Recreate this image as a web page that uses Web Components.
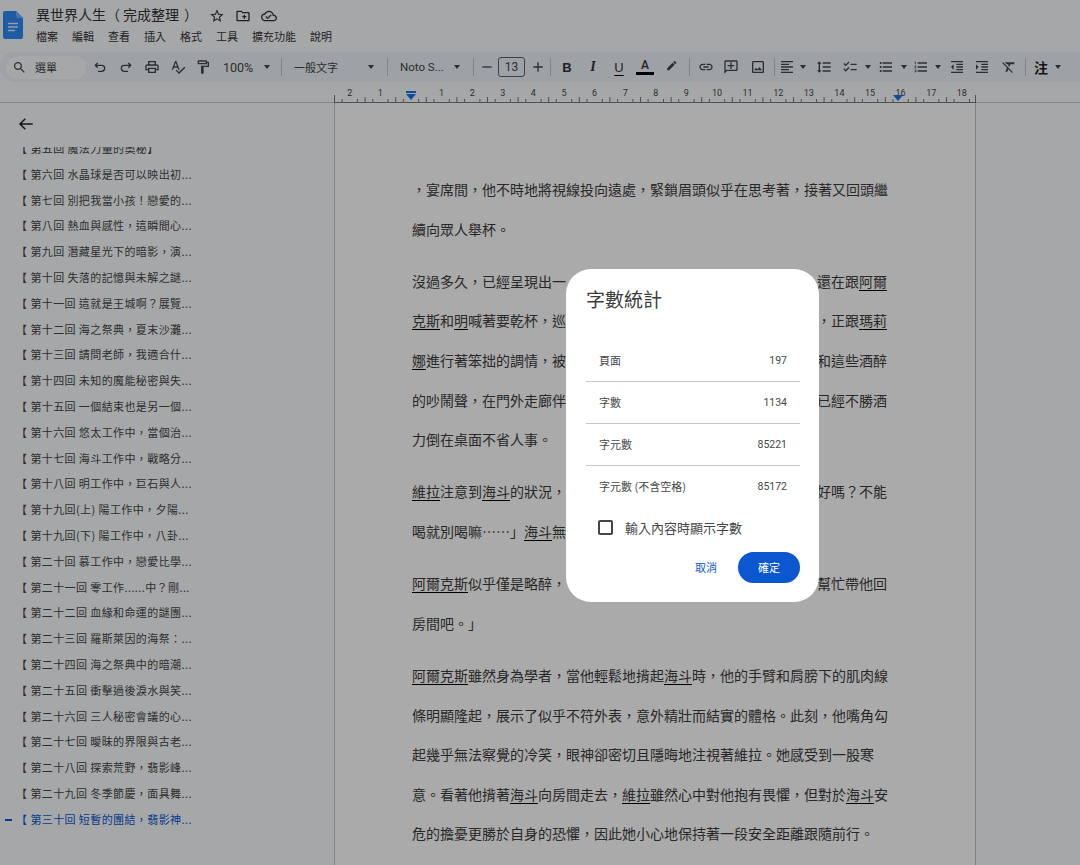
<!DOCTYPE html>
<html lang="zh-Hant">
<head>
<meta charset="utf-8">
<title>異世界人生（完成整理）</title>
<style>
  html, body { margin: 0; height: 100%; overflow: hidden; background: #f9fbfd; }
  body { font-family: "Noto Sans CJK TC", "Noto Sans", sans-serif; color: #444746; }
  u { text-underline-offset: 3px; text-decoration-thickness: 1px; text-decoration-color: #000; }
</style>
</head>
<body>
<docs-app>
  <docs-header slot="header"></docs-header>
  <docs-toolbar slot="toolbar">
    <tb-search></tb-search>
    <tb-space w="1"></tb-space>
    <tb-btn icon="undo" w="26"></tb-btn>
    <tb-btn icon="redo" w="26"></tb-btn>
    <tb-btn icon="print" w="26"></tb-btn>
    <tb-btn icon="spell" w="25"></tb-btn>
    <tb-btn icon="paint" w="26"></tb-btn>
    <tb-text w="43" pad="7" size="12.5">100%</tb-text>
    <tb-caret w="16"></tb-caret>
    <tb-sep w="12"></tb-sep>
    <tb-text w="76" pad="7" size="11">一般文字</tb-text>
    <tb-caret w="16"></tb-caret>
    <tb-sep w="16"></tb-sep>
    <tb-text w="54" pad="5" size="11.5">Noto S...</tb-text>
    <tb-caret w="16"></tb-caret>
    <tb-sep w="16"></tb-sep>
    <tb-btn icon="minus" w="12"></tb-btn>
    <tb-size w="37">13</tb-size>
    <tb-btn icon="plus" w="16"></tb-btn>
    <tb-sep w="8"></tb-sep>
    <tb-glyph w="26" style="font-weight:700">B</tb-glyph>
    <tb-glyph w="26" style="font-family:'Liberation Serif',serif;font-style:italic;font-weight:700;font-size:14px">I</tb-glyph>
    <tb-glyph w="26"><u>U</u></tb-glyph>
    <tb-color w="26">A</tb-color>
    <tb-btn icon="pen" w="27" size="13"></tb-btn>
    <tb-sep w="8"></tb-sep>
    <tb-btn icon="link" w="25"></tb-btn>
    <tb-btn icon="comment" w="26"></tb-btn>
    <tb-btn icon="image" w="27"></tb-btn>
    <tb-sep w="7"></tb-sep>
    <tb-btn icon="align" w="18"></tb-btn>
    <tb-caret w="14"></tb-caret>
    <tb-btn icon="spacing" w="28"></tb-btn>
    <tb-btn icon="check" w="24"></tb-btn>
    <tb-caret w="12"></tb-caret>
    <tb-btn icon="bullets" w="24"></tb-btn>
    <tb-caret w="12"></tb-caret>
    <tb-btn icon="numbers" w="22"></tb-btn>
    <tb-caret w="12"></tb-caret>
    <tb-btn icon="outdent" w="26"></tb-btn>
    <tb-btn icon="indent" w="24"></tb-btn>
    <tb-btn icon="clear" w="30"></tb-btn>
    <tb-sep w="2"></tb-sep>
    <tb-glyph w="30" style="font-weight:700;font-size:14px;color:#222;font-family:'Noto Sans CJK TC',sans-serif">注</tb-glyph>
    <tb-caret w="4"></tb-caret>
  </docs-toolbar>
  <docs-ruler slot="ruler"></docs-ruler>
  <docs-outline slot="outline" active="【第三十回 短暫的團結，翡影神..."></docs-outline>
  <docs-page slot="page">
    <doc-para>
      <doc-line>，宴席間，他不時地將視線投向遠處，緊鎖眉頭似乎在思考著，接著又回頭繼</doc-line>
      <doc-line>續向眾人舉杯。</doc-line>
    </doc-para>
    <doc-para>
      <doc-line>沒過多久，已經呈現出一<span slot="end">還在跟<u>阿爾</u></span></doc-line>
      <doc-line><u>克斯</u>和<u>明</u>喊著要乾杯，巡<span slot="end">，正跟<u>瑪莉</u></span></doc-line>
      <doc-line><u>娜</u>進行著笨拙的調情，被<span slot="end">和這些酒醉</span></doc-line>
      <doc-line>的吵鬧聲，在門外走廊伴<span slot="end">已經不勝酒</span></doc-line>
      <doc-line>力倒在桌面不省人事。</doc-line>
    </doc-para>
    <doc-para>
      <doc-line><u>維拉</u>注意到<u>海斗</u>的狀況，<span slot="end">好嗎？不能</span></doc-line>
      <doc-line>喝就別喝嘛……」<u>海斗</u>無</doc-line>
    </doc-para>
    <doc-para>
      <doc-line><u>阿爾克斯</u>似乎僅是略醉，<span slot="end">幫忙帶他回</span></doc-line>
      <doc-line>房間吧。」</doc-line>
    </doc-para>
    <doc-para>
      <doc-line><u>阿爾克斯</u>雖然身為學者，當他輕鬆地揹起<u>海斗</u>時，他的手臂和肩膀下的肌肉線</doc-line>
      <doc-line>條明顯隆起，展示了似乎不符外表，意外精壯而結實的體格。此刻，他嘴角勾</doc-line>
      <doc-line>起幾乎無法察覺的冷笑，眼神卻密切且隱晦地注視著維拉。她感受到一股寒</doc-line>
      <doc-line>意。看著他揹著<u>海斗</u>向房間走去，<u>維拉</u>雖然心中對他抱有畏懼，但對於<u>海斗</u>安</doc-line>
      <doc-line>危的擔憂更勝於自身的恐懼，因此她小心地保持著一段安全距離跟隨前行。</doc-line>
    </doc-para>
  </docs-page>
  <word-count-dialog slot="dialog">
    <wc-row label="頁面" value="197"></wc-row>
    <wc-row label="字數" value="1134"></wc-row>
    <wc-row label="字元數" value="85221"></wc-row>
    <wc-row label="字元數 (不含空格)" value="85172"></wc-row>
  </word-count-dialog>
</docs-app>

<script>
const ICONS = {
  print: 'M19 8h-1V3H6v5H5c-1.66 0-3 1.34-3 3v6h4v4h12v-4h4v-6c0-1.66-1.34-3-3-3zM8 5h8v3H8V5zm8 12v2H8v-4h8v2zm2-2v-2H6v2H4v-4c0-.55.45-1 1-1h14c.55 0 1 .45 1 1v4h-2z',
  spell: 'M12.45 16h2.09L9.43 3H7.57L2.46 16h2.09l1.12-3h5.64l1.14 3zm-6.02-5L8.5 5.48 10.57 11H6.43zm15.16.59l-8.09 8.09L9.83 16l-1.41 1.41 5.09 5.09L23 13l-1.41-1.41z',
  paint: 'M18 4V3c0-.55-.45-1-1-1H5c-.55 0-1 .45-1 1v4c0 .55.45 1 1 1h12c.55 0 1-.45 1-1V6h1v4H9v11c0 .55.45 1 1 1h2c.55 0 1-.45 1-1v-9h8V4h-3zm-2 2H6V4h10v2zm-5 8v6h0v-6z',
  pen: 'M17.75 7L14 3.25l-10 10V17h3.75l10-10zm2.96-2.96c.39-.39.39-1.02 0-1.41L18.37.29c-.39-.39-1.02-.39-1.41 0L15 2.25 18.75 6l1.96-1.96z',
  link: 'M17 7h-4v2h4c1.65 0 3 1.35 3 3s-1.35 3-3 3h-4v2h4c2.76 0 5-2.24 5-5s-2.24-5-5-5zm-6 8H7c-1.65 0-3-1.35-3-3s1.35-3 3-3h4V7H7c-2.76 0-5 2.24-5 5s2.24 5 5 5h4v-2zm-3-4h8v2H8z',
  comment: 'M20 2H4c-1.1 0-2 .9-2 2v18l4-4h14c1.1 0 2-.9 2-2V4c0-1.1-.9-2-2-2zm0 14H5.17L4 17.17V4h16v12zM11 5h2v4h4v2h-4v4h-2v-4H7V9h4z',
  image: 'M19 5v14H5V5h14m0-2H5c-1.1 0-2 .9-2 2v14c0 1.1.9 2 2 2h14c1.1 0 2-.9 2-2V5c0-1.1-.9-2-2-2zm-4.86 8.86l-3 3.87L9 13.14 6 17h12l-3.86-5.14z',
  align: 'M15 15H3v2h12v-2zm0-8H3v2h12V7zM3 13h18v-2H3v2zm0 8h18v-2H3v2zM3 3v2h18V3H3z',
  spacing: 'M6 7h2.5L5 3.5 1.5 7H4v10H1.5L5 20.5 8.5 17H6V7zm4-2v2h12V5H10zm0 14h12v-2H10v2zm0-6h12v-2H10v2z',
  check: 'M22 7h-9v2h9V7zm0 8h-9v2h9v-2zM5.54 11L2 7.46l1.41-1.41 2.12 2.12 4.24-4.24 1.41 1.41L5.54 11zm0 8L2 15.46l1.41-1.41 2.12 2.12 4.24-4.24 1.41 1.41L5.54 19z',
  bullets: 'M4 10.5c-.83 0-1.5.67-1.5 1.5s.67 1.5 1.5 1.5 1.5-.67 1.5-1.5-.67-1.5-1.5-1.5zm0-6c-.83 0-1.5.67-1.5 1.5S3.17 7.5 4 7.5 5.5 6.83 5.5 6 4.83 4.5 4 4.5zm0 12c-.83 0-1.5.68-1.5 1.5s.68 1.5 1.5 1.5 1.5-.68 1.5-1.5-.67-1.5-1.5-1.5zM7 19h14v-2H7v2zm0-6h14v-2H7v2zm0-8v2h14V5H7z',
  numbers: 'M2 17h2v.5H3v1h1v.5H2v1h3v-4H2v1zm1-9h1V4H2v1h1v3zm-1 3h1.8L2 13.1v.9h3v-1H3.2L5 10.9V10H2v1zm5-6v2h14V5H7zm0 14h14v-2H7v2zm0-6h14v-2H7v2z',
  outdent: 'M11 17h10v-2H11v2zm-8-5l4 4V8l-4 4zm0 9h18v-2H3v2zM3 3v2h18V3H3zm8 6h10V7H11v2zm0 4h10v-2H11v2z',
  indent: 'M3 21h18v-2H3v2zM3 8v8l4-4-4-4zm8 9h10v-2H11v2zM3 3v2h18V3H3zm8 6h10V7H11v2zm0 4h10v-2H11v2z',
  clear: 'M3.27 5L2 6.27l6.97 6.97L6.5 19h3l1.57-3.66L16.73 21 18 19.73 3.55 5.27 3.27 5zM6 5v.18L8.82 8h2.4l-.72 1.68 2.1 2.1L14.21 8H20V5H6z',
  minus: 'M5 11h14v2H5z',
  plus: 'M19 13h-6v6h-2v-6H5v-2h6V5h2v6h6v2z',
  search: 'M15.5 14h-.79l-.28-.27C15.41 12.59 16 11.11 16 9.5 16 5.91 13.09 3 9.5 3S3 5.91 3 9.5 5.91 16 9.5 16c1.61 0 3.09-.59 4.23-1.57l.27.28v.79l5 4.99L20.49 19l-4.99-5zm-6 0C7.01 14 5 11.99 5 9.5S7.01 5 9.5 5 14 7.01 14 9.5 11.99 14 9.5 14z',
  star: 'M22 9.24l-7.19-.62L12 2 9.19 8.63 2 9.24l5.46 4.73L5.82 21 12 17.27 18.18 21l-1.63-7.03L22 9.24zM12 15.4l-3.76 2.27 1-4.28-3.32-2.88 4.38-.38L12 6.1l1.71 4.04 4.38.38-3.32 2.88 1 4.28L12 15.4z',
  folder: 'M20 6h-8l-2-2H4c-1.1 0-2 .9-2 2v12c0 1.1.9 2 2 2h16c1.1 0 2-.9 2-2V8c0-1.1-.9-2-2-2zm0 12H4V6h5.17l2 2H20v10zM13 10h2v2h2v2h-2v2h-2v-2h-2v-2h2z',
  cloud: 'M19.35 10.04C18.67 6.59 15.64 4 12 4 9.11 4 6.6 5.64 5.35 8.04 2.34 8.36 0 10.91 0 14c0 3.31 2.69 6 6 6h13c2.76 0 5-2.24 5-5 0-2.64-2.05-4.78-4.65-4.96zM19 18H6c-2.21 0-4-1.79-4-4 0-2.05 1.53-3.76 3.56-3.97l1.07-.11.5-.95C8.08 7.14 9.94 6 12 6c2.62 0 4.88 1.86 5.39 4.43l.3 1.5 1.53.11c1.56.1 2.78 1.41 2.78 2.96 0 1.65-1.35 3-3 3zm-9-3.82l-2.09-2.09L6.5 13.5 10 17l6.01-6.01-1.41-1.41z'
};
const STROKES = {
  undo: 'M8.5 6 5 9.5 8.5 13M5 9.5h9.5a4.5 4.5 0 0 1 0 9H9',
  redo: 'M15.5 6 19 9.5 15.5 13M19 9.5H9.5a4.5 4.5 0 0 0 0 9H15',
  back: 'M21 12H4M11 5l-7 7 7 7'
};

// small svg helper, every icon goes through here
function iconSvg(name, size, color) {
  const fill = color || 'currentColor';
  const body = STROKES[name]
    ? `<path d="${STROKES[name]}" fill="none" stroke="${fill}" stroke-width="2"/>`
    : `<path d="${ICONS[name]}" fill="${fill}"/>`;
  return `<svg width="${size}" height="${size}" viewBox="0 0 24 24" style="display:block;flex:none">${body}</svg>`;
}

class Base extends HTMLElement {
  constructor() {
    super();
    this.attachShadow({ mode: 'open' });
  }
  connectedCallback() {
    this.shadowRoot.innerHTML = this.render();
  }
}

class DocsApp extends Base {
  render() {
    return `<style>
      :host { display: grid; grid-template-columns: 334px 642px 1fr; grid-template-rows: 52px 30px 6px 15px 762px; width: 1080px; height: 865px; position: relative; overflow: hidden; }
      .h { grid-column: 1 / -1; grid-row: 1; }
      .t { grid-column: 1 / -1; grid-row: 2; }
      .r { grid-column: 1 / -1; grid-row: 4; }
      .o { grid-column: 1; grid-row: 5; min-height: 0; }
      .p { grid-column: 2; grid-row: 5; min-height: 0; }
      .scrim { position: absolute; inset: 0; background: rgba(0,0,0,.335); }
      .d { position: absolute; left: 566px; top: 269px; }
    </style>
    <div class="h"><slot name="header"></slot></div>
    <div class="t"><slot name="toolbar"></slot></div>
    <div class="r"><slot name="ruler"></slot></div>
    <div class="o"><slot name="outline"></slot></div>
    <div class="p"><slot name="page"></slot></div>
    <div class="scrim"></div>
    <div class="d"><slot name="dialog"></slot></div>`;
  }
}

class DocsHeader extends Base {
  render() {
    const menus = ['檔案', '編輯', '查看', '插入', '格式', '工具', '擴充功能', '說明'];
    return `<style>
      :host { display: flex; height: 52px; box-sizing: border-box; padding: 4px 0 0 3px; gap: 13px; }
      .logo { flex: none; margin-top: 7px; }
      .col { display: flex; flex-direction: column; }
      .top { display: flex; align-items: flex-start; height: 20px; }
      .title { font-size: 14px; color: #333; line-height: 20px; width: 173px; white-space: nowrap; }
      .a { padding-right: 3px; }
      .z { padding-left: 5px; }
      .ic { display: flex; gap: 10px; margin-top: 4px; color: #333; }
      nav { display: flex; gap: 14px; font-size: 11px; line-height: 16px; margin-top: 4px; color: #333; white-space: nowrap; }
    </style>
    <svg class="logo" width="20" height="28" viewBox="0 0 20 28">
      <path d="M2 0h11l7 7v19a2 2 0 0 1-2 2H2a2 2 0 0 1-2-2V2a2 2 0 0 1 2-2z" fill="#2d8cf5"/>
      <path d="M13 0l7 7h-5a2 2 0 0 1-2-2z" fill="#6fb0fa"/>
      <path d="M5 12.5h10M5 16h10M5 19.5h7" stroke="#fff" stroke-width="1.4" opacity=".85"/>
    </svg>
    <div class="col">
      <div class="top">
        <div class="title">異世界人生<span class="a">（</span>完成整理<span class="z">）</span></div>
        <div class="ic">${iconSvg('star', 16)}${iconSvg('folder', 16)}${iconSvg('cloud', 16)}</div>
      </div>
      <nav>${menus.map(m => `<span>${m}</span>`).join('')}</nav>
    </div>`;
  }
}

class DocsToolbar extends Base {
  render() {
    return `<style>
      :host { display: flex; align-items: center; height: 30px; box-sizing: border-box; padding-left: 6px; background: #edf2fa; border-radius: 15px 0 0 15px; color: #444746; }
    </style><slot></slot>`;
  }
}

class TbItem extends Base {
  get w() { return this.getAttribute('w') + 'px'; }
  get hostCss() { return `:host { display: flex; flex: none; width: ${this.w}; height: 24px; align-items: center; justify-content: center; }`; }
}

class TbBtn extends TbItem {
  render() {
    return `<style>${this.hostCss} :host{overflow:visible}</style>${iconSvg(this.getAttribute('icon'), this.getAttribute('size') || 16)}`;
  }
}
class TbSpace extends TbItem {
  render() { return `<style>${this.hostCss}</style>`; }
}
class TbCaret extends TbItem {
  render() {
    return `<style>${this.hostCss} i { flex: none; width: 0; height: 0; border: 3.5px solid transparent; border-top: 4px solid currentColor; border-bottom: 0; }</style><i></i>`;
  }
}
class TbSep extends TbItem {
  render() {
    return `<style>${this.hostCss} i { flex: none; width: 1px; height: 18px; background: #c7c7c7; }</style><i></i>`;
  }
}
class TbText extends TbItem {
  render() {
    return `<style>${this.hostCss} :host { justify-content: flex-start; box-sizing: border-box; padding-left: ${this.getAttribute('pad')}px; font: ${this.getAttribute('size')}px Roboto, "Noto Sans CJK TC", sans-serif; white-space: nowrap; }</style><slot></slot>`;
  }
}
class TbSize extends TbItem {
  render() {
    return `<style>${this.hostCss} b { font: 400 12px Roboto, sans-serif; display: flex; align-items: center; justify-content: center; width: 25px; height: 18px; border: 1px solid #5f6368; border-radius: 3px; }</style><b><slot></slot></b>`;
  }
}
class TbGlyph extends TbItem {
  render() {
    return `<style>${this.hostCss} :host { font-family: "Liberation Sans", "Noto Sans CJK TC", sans-serif; font-size: 13px; color: #333; }</style><slot></slot>`;
  }
}
class TbColor extends TbItem {
  render() {
    return `<style>${this.hostCss} :host { flex-direction: column; font: 500 12px/13px Roboto, sans-serif; color: #333; } i { width: 18px; height: 3px; background: #000; }</style><slot></slot><i></i>`;
  }
}
class TbSearch extends Base {
  render() {
    return `<style>
      :host { display: flex; flex: none; align-items: center; width: 80px; height: 23px; box-sizing: border-box; padding-left: 6px; gap: 8px; border-radius: 12px; background: #f9fbfd; font-size: 11px; color: #444746; }
    </style>${iconSvg('search', 15)}<span>選單</span>`;
  }
}

class DocsRuler extends Base {
  render() {
    // ruler origin sits on the left margin, one unit is 30.6px
    const zero = 77, unit = 30.6;
    const labels = [[-2, 2], [-1, 1]];
    for (let i = 1; i <= 18; i++) labels.push([i, i]);
    let ticks = '';
    for (let q = -10; q <= 73; q++) {
      const x = zero + q * unit / 4;
      if (x < 1 || x > 641 || q % 4 === 0) continue;
      const h = q % 2 === 0 ? 5 : 3;
      ticks += `<path d="M${x.toFixed(1)} ${14 - h}V14"/>`;
    }
    return `<style>
      :host { display: block; position: relative; height: 14px; border-bottom: 1px solid #c4c7c5; font: 9px Roboto, sans-serif; color: #444746; }
      svg { position: absolute; left: 334px; top: 0; }
      span { position: absolute; top: 0; line-height: 11px; transform: translateX(-50%); }
      .m { position: absolute; width: 0; height: 0; border: 5px solid transparent; border-top: 6px solid #1a73e8; border-bottom: 0; }
      .b { position: absolute; left: 406px; top: 3px; width: 10px; height: 2px; background: #1a73e8; }
    </style>
    <svg width="642" height="15" stroke="#777" stroke-width="1" fill="none">${ticks}<path d="M.5 7V15M641.5 7V15"/><path d="M1 14.5H641"/></svg>
    ${labels.map(([v, t]) => `<span style="left:${(334 + zero + v * unit).toFixed(1)}px">${t}</span>`).join('')}
    <div class="b"></div><div class="m" style="left:406px;top:6px"></div><div class="m" style="left:893px;top:7px"></div>`;
  }
}

class DocsOutline extends Base {
  render() {
    const items = [
      '第五回 魔法力量的奧秘】', '第六回 水晶球是否可以映出初...', '第七回 別把我當小孩！戀愛的...',
      '第八回 熱血與感性，這瞬間心...', '第九回 潛藏星光下的暗影，演...', '第十回 失落的記憶與未解之謎...',
      '第十一回 這就是王城啊？展覽...', '第十二回 海之祭典，夏末沙灘...', '第十三回 請問老師，我適合什...',
      '第十四回 未知的魔能秘密與失...', '第十五回 一個結束也是另一個...', '第十六回 悠太工作中，當個治...',
      '第十七回 海斗工作中，戰略分...', '第十八回 明工作中，巨石與人...', '第十九回(上) 陽工作中，夕陽...',
      '第十九回(下) 陽工作中，八卦...', '第二十回 慕工作中，戀愛比學...', '第二十一回 零工作......中？剛...',
      '第二十二回 血緣和命運的謎團...', '第二十三回 羅斯萊因的海祭：...', '第二十四回 海之祭典中的暗潮...',
      '第二十五回 衝擊過後淚水與笑...', '第二十六回 三人秘密會議的心...', '第二十七回 曖昧的界限與古老...',
      '第二十八回 探索荒野，翡影峰...', '第二十九回 冬季節慶，面具舞...', '第三十回 短暫的團結，翡影神...'
    ];
    const active = this.getAttribute('active');
    return `<style>
      :host { display: flex; flex-direction: column; height: 100%; overflow: hidden; }
      .back { flex: none; height: 44px; box-sizing: border-box; padding: 12px 0 0 17px; color: #222; }
      .list { flex: 1; min-height: 0; overflow: hidden; }
      .in { margin-top: -11px; }
      .it { height: 25.8px; line-height: 25.8px; font-size: 11px; letter-spacing: .4px; padding-left: 16px; white-space: nowrap; position: relative; color: #444746; }
      .it b { font-weight: 400; padding-right: 3px; }
      .on { color: #0b57d0; }
      .on::before { content: ""; position: absolute; left: 5px; top: 12px; width: 7px; height: 2px; background: #0b57d0; }
    </style>
    <div class="back">${iconSvg('back', 18)}</div>
    <div class="list"><div class="in">
      ${items.map(t => `<div class="it ${'【' + t === active ? 'on' : ''}"><b>【</b>${t}</div>`).join('')}
    </div></div>`;
  }
}

class DocsPage extends Base {
  render() {
    return `<style>
      :host { display: block; height: 100%; box-sizing: border-box; background: #fff; border: solid #c4c7c5; border-width: 0 1px; padding: 67px 88px 0 77px; overflow: hidden; }
    </style><slot></slot>`;
  }
}
class DocPara extends Base {
  render() {
    return `<style>:host { display: block; margin-bottom: 12.6px; }</style><slot></slot>`;
  }
}
class DocLine extends Base {
  render() {
    return `<style>
      :host { display: flex; height: 39.6px; line-height: 39.6px; font-size: 14px; color: #3c3c3c; white-space: nowrap; }
      .g { flex: 1; }
    </style><span><slot></slot></span><span class="g"></span><slot name="end"></slot>`;
  }
}

class WordCountDialog extends Base {
  render() {
    return `<style>
      :host { display: flex; flex-direction: column; width: 253px; height: 333px; box-sizing: border-box; padding: 17px 19px 0 20px; background: #fff; border-radius: 25px; color: #444746; }
      h2 { margin: 0 0 27.5px; font-size: 19px; font-weight: 400; line-height: 26px; color: #3c3c3c; white-space: nowrap; }
      .ck { display: flex; align-items: center; height: 26px; margin: 8px 0 0 12px; gap: 12px; font-size: 13px; white-space: nowrap; }
      .box { flex: none; width: 11px; height: 11px; border: 2px solid #444746; border-radius: 2px; }
      .acts { display: flex; align-items: center; justify-content: flex-end; margin-top: 11px; }
      .c { font-size: 11px; color: #0b57d0; margin-right: 21px; }
      .ok { display: flex; align-items: center; justify-content: center; width: 62px; height: 31px; border-radius: 16px; background: #0b57d0; color: #fff; font-size: 11px; }
    </style>
    <h2>字數統計</h2>
    <slot></slot>
    <div class="ck"><div class="box"></div><span>輸入內容時顯示字數</span></div>
    <div class="acts"><span class="c">取消</span><span class="ok">確定</span></div>`;
  }
}
class WcRow extends Base {
  render() {
    return `<style>
      :host { display: flex; align-items: center; justify-content: space-between; height: 41px; box-sizing: content-box; padding: 0 13px; border-bottom: 1px solid #c7c7c7; font-size: 11px; color: #444746; }
      :host(:last-child) { border-bottom: 0; }
      span:last-child { font-family: Roboto, sans-serif; font-size: 10.5px; }
    </style><span>${this.getAttribute('label')}</span><span>${this.getAttribute('value')}</span>`;
  }
}

const defs = {
  'docs-app': DocsApp, 'docs-header': DocsHeader, 'docs-toolbar': DocsToolbar, 'tb-btn': TbBtn, 'tb-space': TbSpace,
  'tb-caret': TbCaret, 'tb-sep': TbSep, 'tb-text': TbText, 'tb-size': TbSize, 'tb-glyph': TbGlyph, 'tb-color': TbColor,
  'tb-search': TbSearch, 'docs-ruler': DocsRuler, 'docs-outline': DocsOutline, 'docs-page': DocsPage, 'doc-para': DocPara,
  'doc-line': DocLine, 'word-count-dialog': WordCountDialog, 'wc-row': WcRow
};
Object.keys(defs).forEach(k => customElements.define(k, defs[k]));
</script>
</body>
</html>
